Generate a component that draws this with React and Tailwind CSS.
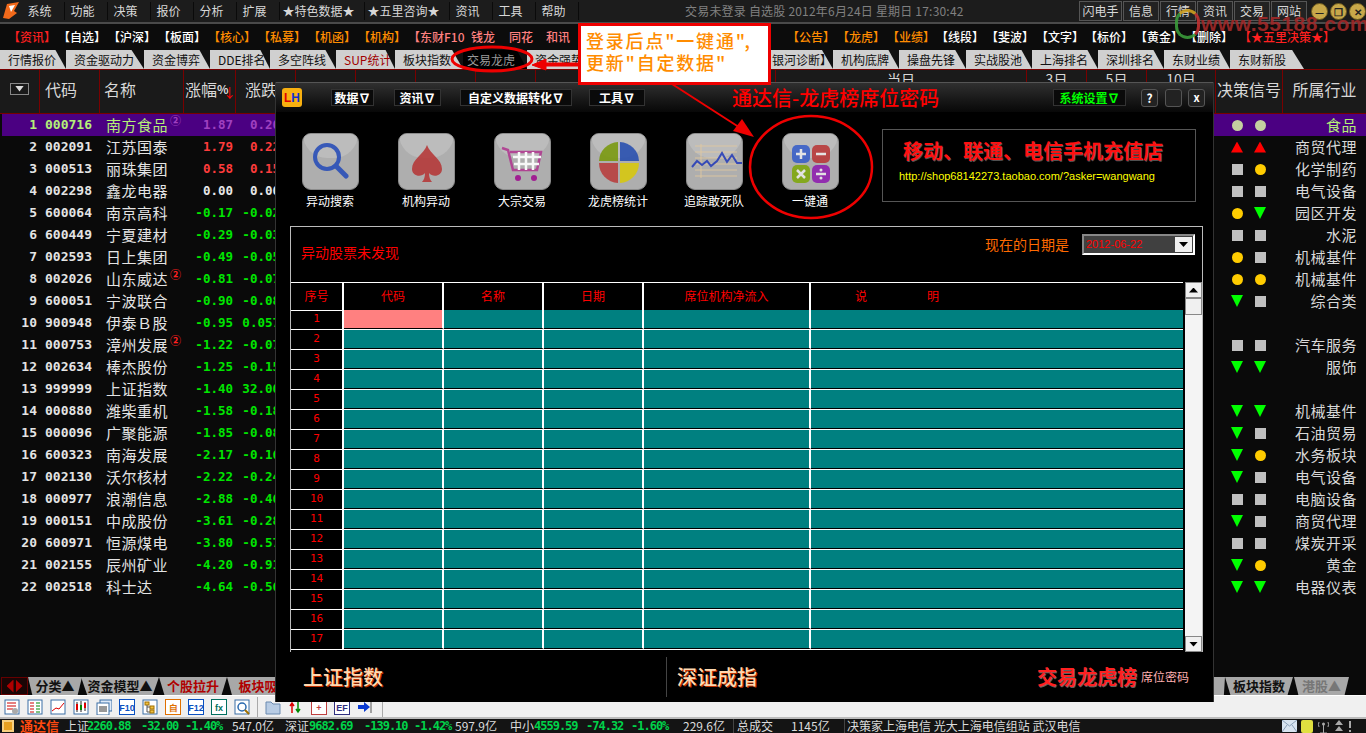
import React from "react";

const mono = "font-['DejaVu_Sans_Mono','Liberation_Mono',monospace]";

const menus = [
  ["系统", 43], ["功能", 43], ["决策", 43], ["报价", 43], ["分析", 43], ["扩展", 43],
  ["★特色数据★", 85], ["★五里咨询★", 85], ["资讯", 43], ["工具", 43], ["帮助", 43],
];

const links = [
  ["【资讯】", "text-[#ff2020]", 50], ["【自选】", "text-white", 50], ["【沪深】", "text-white", 50], ["【板面】", "text-white", 50],
  ["【核心】", "text-[#ff8c00]", 50], ["【私募】", "text-[#ff8c00]", 50], ["【机函】", "text-[#ff8c00]", 50], ["【机构】", "text-[#ff8c00]", 50],
  ["【东财F10", "text-[#ff8080]", 63], ["钱龙", "text-[#ff8080]", 38], ["同花", "text-[#ff8080]", 37], ["和讯", "text-[#ff8080]", 37],
  ["", "text-white", 204],
  ["【公告】", "text-[#ff8c00]", 50], ["【龙虎】", "text-[#ff8c00]", 50], ["【业绩】", "text-[#ff8c00]", 49],
  ["【线段】", "text-white", 50], ["【斐波】", "text-white", 50], ["【文字】", "text-white", 49], ["【标价】", "text-white", 50],
  ["【黄金】", "text-white", 50], ["【删除】", "text-white", 54], ["【★五里决策★】", "text-[#ff2020]", 110],
];

const tabs = [
  ["行情报价", 66], ["资金驱动力", 78], ["资金博弈", 66], ["DDE排名", 60], ["多空阵线", 66], ["SUP统计", 59],
  ["板块指数", 68], ["交易龙虎", 64], ["资金强势", 66], ["", 85], ["", 86], ["银河诊断】", 69], ["机构底牌", 66],
  ["操盘先锋", 67], ["实战股池", 66], ["上海排名", 66], ["深圳排名", 66], ["东财业绩", 66], ["东财新股", 74],
];

const rows = [
  ["000716", "南方食品", "1.87", "0.20", "circleGray", "circleGray", "食品", true],
  ["002091", "江苏国泰", "1.79", "0.22", "up", "up", "商贸代理"],
  ["000513", "丽珠集团", "0.58", "0.15", "square", "circle", "化学制药"],
  ["002298", "鑫龙电器", "0.00", "0.00", "square", "square", "电气设备"],
  ["600064", "南京高科", "-0.17", "-0.02", "circle", "down", "园区开发"],
  ["600449", "宁夏建材", "-0.29", "-0.03", "square", "square", "水泥"],
  ["002593", "日上集团", "-0.49", "-0.05", "circle", "square", "机械基件"],
  ["002026", "山东威达", "-0.81", "-0.07", "circle", "circle", "机械基件", false, "②"],
  ["600051", "宁波联合", "-0.90", "-0.08", "down", "square", "综合类"],
  ["900948", "伊泰Ｂ股", "-0.95", "0.057", "", "", ""],
  ["000753", "漳州发展", "-1.22", "-0.07", "square", "square", "汽车服务", false, "②"],
  ["002634", "棒杰股份", "-1.25", "-0.15", "down", "down", "服饰"],
  ["999999", "上证指数", "-1.40", "32.00", "", "", ""],
  ["000880", "潍柴重机", "-1.58", "-0.18", "down", "down", "机械基件"],
  ["000096", "广聚能源", "-1.85", "-0.08", "down", "square", "石油贸易"],
  ["600323", "南海发展", "-2.17", "-0.16", "down", "circle", "水务板块"],
  ["002130", "沃尔核材", "-2.22", "-0.24", "down", "square", "电气设备"],
  ["000977", "浪潮信息", "-2.88", "-0.46", "square", "square", "电脑设备"],
  ["000151", "中成股份", "-3.61", "-0.28", "down", "square", "商贸代理"],
  ["600971", "恒源煤电", "-3.80", "-0.57", "square", "square", "煤炭开采"],
  ["002155", "辰州矿业", "-4.20", "-0.91", "down", "circle", "黄金"],
  ["002518", "科士达", "-4.64", "-0.56", "down", "down", "电器仪表"],
];

function Signal({ kind }) {
  if (kind === "up") return <span className="w-3 h-[11px] bg-[#ff0000] [clip-path:polygon(50%_0,100%_100%,0_100%)]" />;
  if (kind === "down") return <span className="w-3 h-3 bg-[#00ff00] [clip-path:polygon(0_0,100%_0,50%_100%)]" />;
  if (kind === "circle") return <span className="w-[11px] h-[11px] rounded-full bg-[#ffcc00]" />;
  if (kind === "circleGray") return <span className="w-[11px] h-[11px] rounded-full bg-[#c4d0a0]" />;
  if (kind === "square") return <span className="w-[11px] h-[11px] bg-[#c0c0c0]" />;
  return <span className="w-[11px] h-[11px]" />;
}

function pctColor(v, selected) {
  if (selected) return "text-[#a040c0]";
  if (v.startsWith("-") || v === "0.057" || v === "32.00") return "text-[#00e600]";
  if (v === "0.00") return "text-[#e8e8e8]";
  return "text-[#ff3c3c]";
}

function StockRow({ row, index }) {
  const [code, name, pct, chg, s1, s2, industry, selected, mark] = row;
  const base = selected ? "text-[#b4f078]" : "text-[#e4e4e4]";
  return (
    <div className={`flex h-[22px] items-center ${selected ? "bg-[#4b0082] ml-[2px]" : ""}`}>
      <span className={`${selected ? "w-[35px]" : "w-[37px]"} text-right text-[13px] font-bold ${mono} ${base}`}>{index + 1}</span>
      <span className={`w-[61px] pl-2 text-[13px] font-bold whitespace-nowrap ${mono} ${base}`}>{code}</span>
      <span className={`relative w-[81px] pl-[8px] text-[15px] tracking-[0.5px] whitespace-nowrap ${base}`}>
        {name}
        {mark && <span className="absolute left-[72px] top-0 text-[11px] leading-[12px] text-[#ff2020] font-bold">{mark}</span>}
        {selected && <span className="absolute left-[72px] top-0 text-[11px] leading-[12px] text-[#a040c0] font-bold">②</span>}
      </span>
      <span className={`w-[54px] text-right text-[12.5px] font-bold ${mono} ${pctColor(pct, selected)}`}>{pct}</span>
      <span className={`w-[47px] text-right text-[12.5px] font-bold ${mono} ${pctColor(chg, selected)}`}>{chg}</span>
      <span className="flex-1" />
      <span className="flex w-[71px] pl-[19px] gap-[11px] items-center">
        <span className="w-3 flex justify-center"><Signal kind={s1} /></span>
        <span className="w-3 flex justify-center"><Signal kind={s2} /></span>
      </span>
      <span className={`w-[83px] pr-[9px] text-right text-[15px] tracking-[0.5px] whitespace-nowrap ${selected ? "text-[#b4f078]" : "text-[#d8d8d8]"}`}>{industry}</span>
    </div>
  );
}

function TopBar() {
  return (
    <div className="flex h-[22px] items-center bg-[#1c1c1c] text-[12px] text-[#d8d8d8]">
      <svg width="20" height="20" viewBox="0 0 20 20" className="ml-[2px] shrink-0">
        <path d="M1 17 L5 3 L17 1 L12 10 L15 12 L7 18 Z" fill="#f26a1b" />
        <path d="M7 5 L13 4 L9 11 Z" fill="#ffffff" />
      </svg>
      {menus.map(([m, w]) => (
        <span key={m} style={{ width: w }} className="flex justify-center pr-[7px] shrink-0 border-r border-[#0a0a0a] whitespace-nowrap">{m}</span>
      ))}
      <span className="ml-[106px] whitespace-nowrap text-[#808080] w-[394px] tracking-[0.2px]">交易未登录 自选股 2012年6月24日 星期日 17:30:42</span>
      <span className="flex gap-[1px] w-[228px]">
        {["闪电手", "信息", "行情", "资讯", "交易", "网站"].map((b, i) => (
          <span key={b} className={`${i === 0 ? "w-[43px]" : "w-[36px]"} h-[20px] flex items-center justify-center border border-[#555] bg-[#222] whitespace-nowrap`}>{b}</span>
        ))}
      </span>
      <span className="ml-[4px] flex gap-[2px]">
        {["—", "❐", "✕"].map((c) => (
          <span key={c} className="w-[17px] h-[17px] rounded-full bg-[#c8a84a] border border-[#6d5a1e] text-[#222] text-[10px] font-bold flex items-center justify-center">{c}</span>
        ))}
      </span>
    </div>
  );
}

function LinkBar() {
  return (
    <div className="flex h-[28px] items-center pl-[8px] bg-[#0c0c0c] border-t-2 border-[#4a4a4a] text-[12px] whitespace-nowrap overflow-hidden">
      {links.map(([t, c, w], i) => (
        <span key={i} style={{ width: w }} className={`${c} shrink-0 font-medium`}>{t}</span>
      ))}
    </div>
  );
}

function TabBar() {
  return (
    <div className="flex h-[20px] bg-[#111] text-[12px] border-b border-[#7a0000]">
      {tabs.map(([t, w], i) => (
        <span
          key={i}
          style={{ width: w }}
          className={`shrink-0 flex items-center whitespace-nowrap [clip-path:polygon(0_0,84%_0,100%_100%,0_100%)] ${
            t === "交易龙虎" ? "bg-black text-[#999] pl-[4px]" : t === "SUP统计" ? "bg-[#d0d0d0] text-[#a00000] pl-[8px]" : "bg-[#d0d0d0] text-[#111] pl-[8px]"
          }`}
        >
          {t}
        </span>
      ))}
    </div>
  );
}

function HeadCell({ w, children, className = "" }) {
  return (
    <div style={{ width: w }} className={`h-full shrink-0 border-r border-[#7a0000] flex items-center overflow-hidden text-[16px] text-[#d8d8d8] ${className}`}>
      {children}
    </div>
  );
}

function TableHead() {
  return (
    <div className="flex h-[44px] bg-[#1a1a1a] border-b border-[#7a0000]">
      <HeadCell w={40} className="justify-center pb-[6px]">
        <span className="w-[19px] h-[12px] border border-[#888] flex items-center justify-center">
          <span className="w-[9px] h-[6px] bg-[#ddd] [clip-path:polygon(0_0,100%_0,50%_100%)]" />
        </span>
      </HeadCell>
      <HeadCell w={60} className="pl-[5px] pb-[6px]">代码</HeadCell>
      <HeadCell w={84} className="pl-[4px] pb-[6px]">名称</HeadCell>
      <HeadCell w={52} className="pl-[1px] pb-[6px] relative">
        涨幅<span className="text-[12px] font-bold">%</span>
        <span className="absolute left-[39px] top-[12px] text-[#ff0000] text-[13px]">↓</span>
      </HeadCell>
      <HeadCell w={60} className="pl-[9px] pb-[6px] whitespace-nowrap">涨跌</HeadCell>
      <HeadCell w={60} /><HeadCell w={60} /><HeadCell w={60} /><HeadCell w={60} /><HeadCell w={60} /><HeadCell w={60} /><HeadCell w={60} /><HeadCell w={60} />
      <HeadCell w={251} className="justify-center items-start"><span className="-mt-[1px] text-[14px]">当日</span></HeadCell>
      <HeadCell w={60} className="justify-center items-start"><span className="-mt-[1px] text-[14px]">3日</span></HeadCell>
      <HeadCell w={60} className="justify-center items-start"><span className="-mt-[1px] text-[14px]">5日</span></HeadCell>
      <HeadCell w={69} className="justify-center items-start"><span className="-mt-[1px] text-[14px]">10日</span></HeadCell>
      <HeadCell w={67} className="justify-center pb-[6px] whitespace-nowrap">决策信号</HeadCell>
      <div className="flex-1 flex items-center justify-center pb-[6px] text-[16px] text-[#d8d8d8]">所属行业</div>
    </div>
  );
}

function BottomTabs() {
  const shape = "[clip-path:polygon(0_0,100%_0,92%_100%,8%_100%)] flex items-center justify-center font-bold text-[13px] whitespace-nowrap";
  return (
    <div className="flex h-[18px] bg-[#0a0a0a]">
      <span className="ml-[1px] w-[27px] flex items-center justify-center gap-[2px] border border-[#600] bg-[#1a0505]">
        <span className="w-[7px] h-[13px] bg-[#b00000] [clip-path:polygon(100%_0,100%_100%,0_50%)]" />
        <span className="w-[7px] h-[13px] bg-[#b00000] [clip-path:polygon(0_0,100%_50%,0_100%)]" />
      </span>
      <span className={`w-[54px] bg-[#a8a8a8] text-[#111] ${shape}`}>分类▲</span>
      <span className={`w-[78px] -ml-[1px] bg-[#a8a8a8] text-[#111] ${shape}`}>资金模型▲</span>
      <span className={`w-[68px] bg-[#a8a8a8] text-[#b00000] ${shape}`}>个股拉升</span>
      <span className={`w-[62px] bg-[#a8a8a8] text-[#b00000] ${shape}`}>板块吸</span>
      <span className="flex-1" />
      <span className={`w-[14px] bg-[#a8a8a8] ${shape}`} />
      <span className={`w-[68px] bg-[#a8a8a8] text-[#111] ${shape}`}>板块指数</span>
      <span className={`w-[55px] ml-[1px] bg-[#a8a8a8] text-[#777] ${shape}`}>港股▲</span>
      <span className="w-[17px]" />
    </div>
  );
}

const tool = {
  list: <><rect x="1" y="1" width="14" height="14" fill="#fff" stroke="#3a6ea5" /><path d="M3 4h9M3 7h9M3 10h6" stroke="#c00" /><circle cx="11" cy="12" r="3" fill="#aaa" /></>,
  grid: <><rect x="1" y="1" width="14" height="14" fill="#fff" stroke="#3a6ea5" /><path d="M3 4h4M3 7h4M3 10h4M3 13h4" stroke="#c00" /><path d="M9 4h4M9 7h4M9 10h4M9 13h4" stroke="#080" /></>,
  line: <><rect x="1" y="1" width="14" height="14" fill="#fff" stroke="#3a6ea5" /><path d="M2 12l4-3 3 1 5-6" fill="none" stroke="#d00" /></>,
  candle: <><rect x="1" y="1" width="14" height="14" fill="#fff" stroke="#3a6ea5" /><path d="M4 3v10M8 2v11M12 3v9" stroke="#222" /><rect x="3" y="5" width="2" height="6" fill="#d00" /><rect x="7" y="6" width="2" height="5" fill="#080" /><rect x="11" y="4" width="2" height="5" fill="#d00" /></>,
  win: <><rect x="4" y="1" width="12" height="11" fill="#dfeaf8" stroke="#3a6ea5" /><rect x="1" y="4" width="12" height="12" fill="#fff" stroke="#3a6ea5" /><path d="M3 8h8M3 10h8M3 12h8" stroke="#333" /></>,
  tree: <><rect x="1" y="1" width="14" height="14" fill="#fff" stroke="#3a6ea5" /><rect x="3" y="3" width="4" height="3" fill="#f0c040" stroke="#a07000" /><rect x="8" y="7" width="4" height="3" fill="#f0c040" stroke="#a07000" /><rect x="8" y="11" width="4" height="3" fill="#f0c040" stroke="#a07000" /><path d="M5 6v7h3M5 8h3" stroke="#555" fill="none" /></>,
  find: <><rect x="1" y="1" width="14" height="14" fill="#fff" stroke="#3a6ea5" /><circle cx="8" cy="8" r="4" fill="none" stroke="#2a6ab0" strokeWidth="1.5" /><path d="M11 11l4 4" stroke="#a07000" strokeWidth="2" /></>,
  folder: <><path d="M1 3h5l2 2h7v10H1z" fill="#b8cce4" stroke="#6a8ab0" /></>,
  arrows: <><path d="M4 14V5M2 7l2-3 2 3" stroke="#d00" fill="none" strokeWidth="1.5" /><path d="M10 3v9M8 10l2 3 2-3" stroke="#080" fill="none" strokeWidth="1.5" /></>,
  export: <><path d="M1 6h6V3l6 5-6 5v-3H1z" fill="#0a3ad0" /><path d="M14 2v12" stroke="#555" /></>,
};

function TextIcon({ text, color = "#0a50c0" }) {
  return (
    <svg width="16" height="16" viewBox="0 0 16 16" className="shrink-0">
      <rect x="0.5" y="0.5" width="15" height="15" fill="#fff" stroke={color} />
      <text x="8" y="12" textAnchor="middle" fontSize="9" fontWeight="bold" fontFamily="Liberation Sans" fill={color}>{text}</text>
    </svg>
  );
}

function Tool({ name }) {
  return <svg width="16" height="16" viewBox="0 0 16 16" className="shrink-0">{tool[name]}</svg>;
}

function ToolBar() {
  return (
    <div className="flex h-[24px] items-center pl-[4px] gap-[7px] bg-[#f0f0f0] border-t border-[#fff] border-b-2 border-b-[#bbb]">
      <Tool name="list" /><Tool name="grid" /><Tool name="line" /><Tool name="candle" /><Tool name="win" />
      <TextIcon text="F10" /><Tool name="tree" /><TextIcon text="自" color="#e07000" /><TextIcon text="F12" />
      <TextIcon text="fx" color="#007060" /><Tool name="find" />
      <span className="w-[1px] h-[20px] bg-[#aaa]" />
      <Tool name="folder" /><Tool name="arrows" /><TextIcon text="+" color="#c04040" /><TextIcon text="EF" color="#303080" /><Tool name="export" />
      <span className="ml-[2px] w-[1px] h-full bg-[#aaa]" />
    </div>
  );
}

function StatusBar() {
  const g = `text-[#00d24a] font-bold text-[12px] leading-[14px] ${mono} tracking-[-1px]`;
  const w = "text-[#dcdcdc] text-[12px] leading-[14px]";
  return (
    <div className="flex h-[14px] items-center bg-[#141414] whitespace-nowrap overflow-hidden">
      <span className="ml-[2px] w-[12px] h-[12px] bg-[#e8a020] border-2 border-[#f8d080]" />
      <span className="ml-[6px] w-[45px] text-[#ff4a10] font-bold text-[13px] leading-[14px]">通达信</span>
      <span className={`${w} w-[22px]`}>上证</span>
      <span className={`${g} w-[54px]`}>2260.88</span>
      <span className={`${g} w-[44px]`}>-32.00</span>
      <span className={`${g} w-[47px]`}>-1.40%</span>
      <span className={`${w} w-[53px]`}>547.0亿</span>
      <span className={`${w} w-[24px]`}>深证</span>
      <span className={`${g} w-[55px]`}>9682.69</span>
      <span className={`${g} w-[50px]`}>-139.10</span>
      <span className={`${g} w-[41px]`}>-1.42%</span>
      <span className={`${w} w-[55px]`}>597.9亿</span>
      <span className={`${w} w-[24px]`}>中小</span>
      <span className={`${g} w-[52px]`}>4559.59</span>
      <span className={`${g} w-[45px]`}>-74.32</span>
      <span className={`${g} w-[52px]`}>-1.60%</span>
      <span className={`${w} w-[50px]`}>229.6亿</span>
      <span className="w-[1px] h-full bg-[#444] mr-[3px]" />
      <span className={`${w} w-[54px]`}>总成交</span>
      <span className={`${w} w-[53px]`}>1145亿</span>
      <span className="w-[1px] h-full bg-[#444] mr-[2px]" />
      <span className={`${w} w-[435px]`}>决策家上海电信 光大上海电信组站 武汉电信</span>
      <span className="flex items-center gap-[4px]">
        <svg width="15" height="12" viewBox="0 0 15 12"><rect width="15" height="12" fill="#d8e4f0" /><path d="M0 0l7.5 6L15 0M0 12l5-7M15 12l-5-7" stroke="#8aa0b8" fill="none" /></svg>
        <span className="w-[12px] h-[13px] rounded-[2px] bg-[#e0e040]" />
        <svg width="13" height="13" viewBox="0 0 13 13"><path d="M6.5 4v9M3 13h7" stroke="#aaa" /><path d="M2 2a6 6 0 0 0 0 5M11 2a6 6 0 0 1 0 5" stroke="#aaa" fill="none" /><circle cx="6.5" cy="4" r="1.5" fill="#aaa" /></svg>
        <svg width="10" height="13" viewBox="0 0 10 13"><path d="M5 0L9 5H1zM5 6L9 11H1z" fill="#aaa" /></svg>
        <svg width="4" height="13" viewBox="0 0 4 13"><path d="M1 1h2v7H1zM1 10h2v2H1z" fill="#aaa" /></svg>
      </span>
    </div>
  );
}

const tiles = [
  ["异动搜索", <><circle cx="24" cy="23" r="12" fill="none" stroke="#2a4fb8" strokeWidth="4" /><path d="M33 32l10 10" stroke="#2a4fb8" strokeWidth="5" strokeLinecap="round" /></>],
  ["机构异动", <path d="M28 11c3 9 15 14 15 24 0 7-9 9-13 4 0 4 1 7 3 9H23c2-2 3-5 3-9-4 5-13 3-13-4 0-10 12-15 15-24z" fill="#b53a3a" />],
  ["大宗交易", <><path d="M7 14l6 2 5 20h24l4-18H15" fill="none" stroke="#b03a90" strokeWidth="2.5" /><path d="M18 23h28M19 30h25M24 18v18M31 18v18M38 18v18" stroke="#fff" strokeWidth="2.5" /><circle cx="23" cy="44" r="3" fill="#a01090" /><circle cx="39" cy="44" r="3" fill="#a01090" /></>],
  ["龙虎榜统计", <><path d="M8 27a20 20 0 0 1 19-19v19z" fill="#7a9a10" /><path d="M29 8a20 20 0 0 1 19 19H29z" fill="#2a50b0" /><path d="M8 29h19v20a20 20 0 0 1-19-20z" fill="#b84040" /><path d="M29 29h19a20 20 0 0 1-19 20z" fill="#d8c810" /></>],
  ["追踪敢死队", <><path d="M8 12h42M8 18h42M8 24h42M8 30h42M8 36h42M8 42h42M14 10v34" stroke="#e0c8a0" strokeWidth="1" /><path d="M5 33l5-6 5 4 5-4 4 5 6-5 5-8 5 9 5-7 5 8 5 0" fill="none" stroke="#2a40b8" strokeWidth="2" /></>],
  ["一键通", <><rect x="9" y="11" width="18" height="18" rx="5" fill="#3a60c8" /><rect x="29" y="11" width="18" height="18" rx="5" fill="#b83a3a" /><rect x="9" y="31" width="18" height="18" rx="5" fill="#80a810" /><rect x="29" y="31" width="18" height="18" rx="5" fill="#9020b0" /><path d="M13 20h10M18 15v10M33 20h10M14 36l8 8M22 36l-8 8M33 40h10" stroke="#e8e8e8" strokeWidth="2.5" /><circle cx="38" cy="36" r="1.5" fill="#e8e8e8" /><circle cx="38" cy="44" r="1.5" fill="#e8e8e8" /></>],
];

function Tile({ label, art }) {
  return (
    <div className="w-[96px] shrink-0 flex flex-col items-center">
      <div className="relative w-[57px] h-[57px] rounded-[9px] bg-[#aeaeae] border border-[#8c8c8c] overflow-hidden">
        <div className="absolute inset-x-0 top-0 h-[24px] bg-[#bcbcbc] rounded-b-[30px]" />
        <svg width="56" height="56" viewBox="0 0 56 56" className="relative opacity-90">{art}</svg>
      </div>
      <span className="mt-[3px] text-[12px] leading-[16px] text-white whitespace-nowrap">{label}</span>
    </div>
  );
}

function DlgMenu({ w, ml, children, green }) {
  return (
    <span style={{ width: w, marginLeft: ml }} className={`h-[17px] shrink-0 flex items-center justify-center border border-[#333] bg-[#0a0a0a] text-[12px] font-bold whitespace-nowrap ${green ? "text-[#00ff00]" : "text-white"}`}>
      {children}
    </span>
  );
}

const columns = [
  ["代码", 100, "justify-center"], ["名称", 100, "justify-center"], ["日期", 100, "justify-center"],
  ["席位机构净流入", 167, "justify-center"], ["说　　　　　明", 372, "justify-start pl-[44px]"],
];

function Grid() {
  const nums = Array.from({ length: 17 }, (_, i) => i + 1);
  return (
    <div className="flex flex-1">
      <div className="w-[892px] shrink-0">
        <div className="flex h-[27px] border-y border-white box-content -mb-[1px]">
          <div className="w-[53px] pb-[2px] flex items-center justify-center text-[12px] text-[#ff0000] border-r-2 border-white">序号</div>
          {columns.map(([c, w, align]) => (
            <div key={c} style={{ width: w }} className={`pb-[2px] flex items-center ${align} text-[12px] text-[#ff0000] border-r-2 border-white last:border-r-0 whitespace-nowrap`}>{c}</div>
          ))}
        </div>
        {nums.map((n) => (
          <div key={n} className="flex h-[20px] border-b border-white">
            <div className={`w-[53px] flex items-center justify-center text-[11px] text-[#ff0000] border-r-2 border-white ${mono}`}>{n}</div>
            {columns.map(([c, w], i) => (
              <div key={c} style={{ width: w }} className={`border-b border-black border-r-2 border-r-white last:border-r-0 ${n === 1 && i === 0 ? "bg-[#ff8080]" : "bg-[#008080]"}`} />
            ))}
          </div>
        ))}
      </div>
      <div className="w-[17px] ml-[2px] flex flex-col bg-[#f4f4f4]">
        <span className="h-[16px] flex items-center justify-center bg-[#f0f0f0] border border-[#888]"><span className="w-[9px] h-[5px] bg-black [clip-path:polygon(50%_0,100%_100%,0_100%)]" /></span>
        <span className="h-[17px] bg-[#f0f0f0] border border-[#888]" />
        <span className="flex-1" />
        <span className="h-[16px] flex items-center justify-center bg-[#f0f0f0] border border-[#888]"><span className="w-[9px] h-[5px] bg-black [clip-path:polygon(0_0,100%_0,50%_100%)]" /></span>
      </div>
    </div>
  );
}

function Dialog() {
  const glow = "[text-shadow:1px_1px_0_#c03000]";
  return (
    <div className="absolute left-[275px] top-[82px] w-[939px] h-[620px] flex flex-col bg-black border-l border-r border-[#333]">
      <div className="flex h-[30px] shrink-0 items-center pl-[6px] bg-gradient-to-b from-[#303030] to-[#080808] border-t border-[#555]">
        <span className="w-[20px] h-[19px] rounded-[3px] bg-[#f8b010] flex items-center justify-center text-[12px] font-bold leading-none font-['Liberation_Sans',sans-serif]">
          <span className="text-[#e00000]">L</span><span className="text-[#1030d0]">H</span>
        </span>
        <DlgMenu w={43} ml={29}>数据∇</DlgMenu>
        <DlgMenu w={47} ml={20}>资讯∇</DlgMenu>
        <DlgMenu w={112} ml={19}>自定义数据转化∇</DlgMenu>
        <DlgMenu w={56} ml={17}>工具∇</DlgMenu>
        <span className="ml-[87px] w-[321px] text-[20px] leading-none font-medium text-[#ff0000] whitespace-nowrap">通达信-龙虎榜席位密码</span>
        <DlgMenu w={73} ml={0} green>系统设置∇</DlgMenu>
        <span className="ml-[15px] w-[17px] h-[18px] rounded-[3px] bg-[#222] border border-[#555] flex items-center justify-center text-white text-[12px] font-bold">?</span>
        <span className="ml-[7px] w-[17px] h-[18px] rounded-[3px] bg-[#222] border border-[#555]" />
        <span className="ml-[6px] w-[17px] h-[18px] rounded-[3px] bg-[#222] border border-[#555] flex items-center justify-center text-white text-[11px] font-bold">x</span>
      </div>

      <div className="flex h-[114px] shrink-0 pt-[21px]">
        <div className="flex ml-[6px] w-[600px] shrink-0">
          {tiles.map(([label, art]) => <Tile key={label} label={label} art={art} />)}
        </div>
        <div className="w-[314px] h-[73px] -mt-[4px] border border-[#555] pl-[20px] pt-[7px]">
          <div className="text-[20px] leading-[28px] font-bold text-[#ff1010] whitespace-nowrap [text-shadow:1px_1px_0_#ffffff55]">移动、联通、电信手机充值店</div>
          <div className="-ml-[4px] mt-[4px] text-[11px] leading-[14px] text-[#ffff00] whitespace-nowrap font-['Liberation_Sans',sans-serif]">http://shop68142273.taobao.com/?asker=wangwang</div>
        </div>
      </div>

      <div className="ml-[14px] w-[913px] h-[426px] shrink-0 flex flex-col border border-b-0 border-[#bbb]">
        <div className="flex h-[55px] shrink-0 items-start justify-between pl-[10px] pr-[7px]">
          <span className="mt-[15px] text-[14px] leading-[20px] text-[#ff0000]">异动股票未发现</span>
          <span className="flex items-center mt-[7px]">
            <span className="text-[14px] text-[#ff6a00] mr-[13px]">现在的日期是</span>
            <span className="w-[113px] h-[21px] flex items-center justify-between bg-[#404040] border-2 border-[#888] border-b-white border-r-white pl-[2px] pr-[1px]">
              <span className="text-[11px] text-[#ff0000] font-['Liberation_Sans',sans-serif]">2012-06-22</span>
              <span className="w-[17px] h-[15px] bg-[#f0f0f0] flex items-center justify-center"><span className="w-[9px] h-[5px] bg-black [clip-path:polygon(0_0,100%_0,50%_100%)]" /></span>
            </span>
          </span>
        </div>
        <Grid />
      </div>

      <div className="flex flex-1 items-center">
        <div className={`ml-[27px] w-[363px] text-[20px] font-medium text-[#ffd8b0] ${glow} whitespace-nowrap`}>上证指数</div>
        <div className="w-[1px] h-[40px] bg-[#444]" />
        <div className={`ml-[10px] w-[360px] text-[20px] font-medium text-[#ffd8b0] ${glow} whitespace-nowrap`}>深证成指</div>
        <div className="text-[20px] font-bold text-[#ff2020] [text-shadow:1px_1px_0_#ffffff66] whitespace-nowrap">交易龙虎榜</div>
        <div className="ml-[4px] text-[12px] text-[#ffb0b0] whitespace-nowrap">席位密码</div>
      </div>
    </div>
  );
}

function Notes() {
  return (
    <>
      <svg width="1366" height="733" className="absolute left-0 top-0 pointer-events-none">
        <ellipse cx="492" cy="59" rx="40" ry="12" fill="none" stroke="#ee0000" strokeWidth="3" />
        <path d="M578 63H546V59L532 65L546 70V66H578Z" fill="#ee0000" stroke="#ee0000" />
        <path d="M672 84L745 131" stroke="#ee0000" strokeWidth="2" />
        <path d="M754 137L733 131L742 119Z" fill="#ee0000" />
        <ellipse cx="811" cy="167" rx="61" ry="51" fill="none" stroke="#ee0000" strokeWidth="2.5" />
      </svg>
      <div className="absolute left-[578px] top-[23px] w-[193px] h-[62px] bg-white border-[3px] border-[#ee0000] pl-[5px] pt-[3px] text-[18px] leading-[22px] font-medium text-[#ff8c00] tracking-[1.8px] whitespace-nowrap">
        <div>登录后点"一键通",</div>
        <div>更新"自定数据"</div>
      </div>
      <div className="absolute left-[1175px] top-[8px] flex items-center pointer-events-none opacity-90">
        <span className="w-[25px] h-[30px] rounded-full border-[3px] border-[#3a9a3a] border-t-[#d0a020] border-r-[#c03030]" />
        <span className="ml-[1px] text-[21px] font-bold text-[#a02828] tracking-[0.5px] font-['Liberation_Sans',sans-serif]">www.55188.com</span>
      </div>
    </>
  );
}

export default function App() {
  return (
    <div className="relative w-[1366px] h-[733px] overflow-hidden flex flex-col bg-[#0a0a0a] font-['Noto_Sans_CJK_SC','Liberation_Sans',sans-serif]">
      <TopBar />
      <LinkBar />
      <TabBar />
      <TableHead />
      <div className="flex-1 min-h-0 overflow-hidden">
        {rows.map((r, i) => <StockRow key={r[0]} row={r} index={i} />)}
      </div>
      <BottomTabs />
      <ToolBar />
      <StatusBar />
      <Dialog />
      <Notes />
    </div>
  );
}
